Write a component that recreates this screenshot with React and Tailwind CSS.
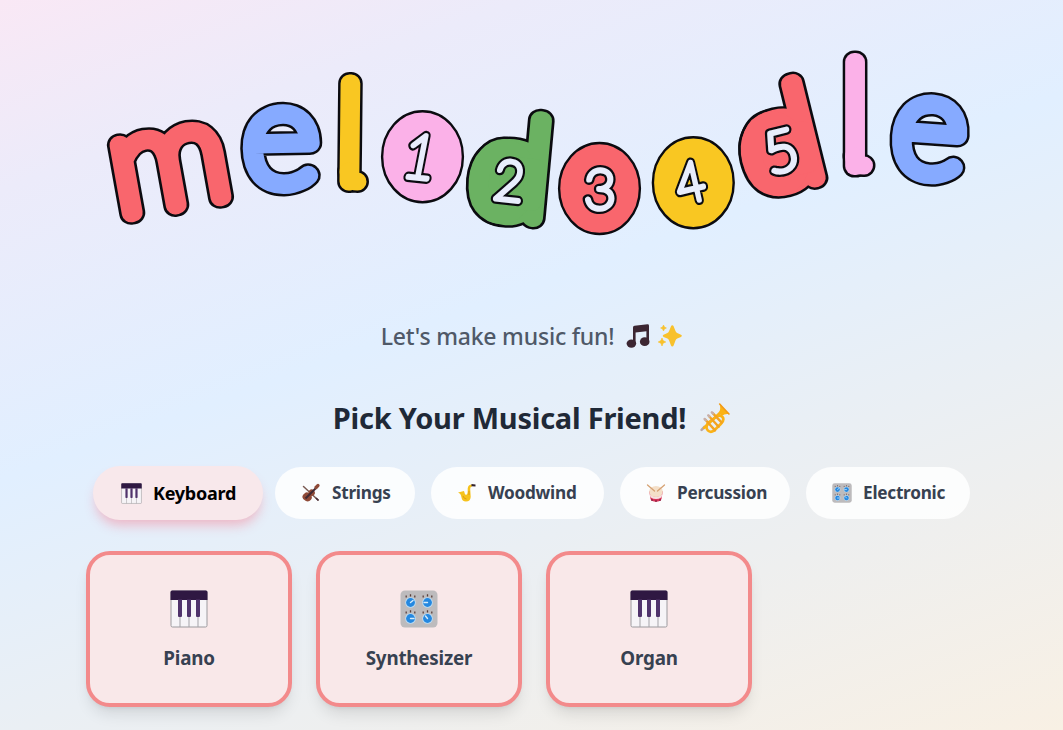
const BLOBS = [
  { id: "m", ch: "m", color: "#f9666d", size: 142, t: "translate(176.3 205.3) rotate(-10.2) scale(1.06 1)" },
  { id: "e1", ch: "e", color: "#86aaff", size: 142, t: "translate(281.500 184) rotate(-1) scale(1.03 1)" },
  { id: "l1", ch: "l", color: "#f9c722", size: 136, t: "translate(349.5 181.5) rotate(0.6)", tail: "M-1 -10 Q0 0 8 0" },
  { id: "d1", ch: "d", color: "#6bb262", size: 136, t: "translate(506.5 215.5) rotate(5.3) scale(1.09 1)", bowl: true },
  { id: "d2", ch: "d", color: "#f9666d", size: 136, t: "translate(790 184.5) rotate(-13.9) scale(1.09 1)", bowl: true },
  { id: "l2", ch: "l", color: "#fbb1e8", size: 145, t: "translate(855 166)", tail: "M-1 -10 Q0 0 9 -0.5" },
  { id: "e2", ch: "e", color: "#86aaff", size: 142, t: "translate(926.500 174) rotate(4)" },
];

const CIRCLES = [
  { cx: 422.5, cy: 156.7, color: "#fbb1e8" },
  { cx: 599.5, cy: 188.5, color: "#f9666d" },
  { cx: 693.3, cy: 182.7, color: "#f9c722" },
];

const DIGITS = [
  { ch: "1", size: 61, t: "translate(416 178) rotate(6) skewX(-5) scale(0.9 1)" },
  { ch: "2", size: 55, t: "translate(507 200) rotate(6) scale(0.95 1)" },
  { ch: "3", size: 55, t: "translate(600 208.500)" },
  { ch: "4", size: 55, t: "translate(694.500 201) rotate(-13) scale(0.88 1)" },
  { ch: "5", size: 57, t: "translate(786 170.500) rotate(-14)" },
];

function Logo() {
  return (
    <svg className="block h-[270px] w-full shrink-0 font-['Lato',sans-serif] font-thin" viewBox="0 0 1063 270" strokeLinejoin="round" strokeLinecap="round" textAnchor="middle">
      <defs>
        {BLOBS.map((b) => (
          <g key={b.id} id={b.id} transform={b.t}>
            <text fontSize={b.size} stroke="inherit">{b.ch}</text>
            {b.tail && <path d={b.tail} fill="none" />}
            {b.bowl && <ellipse cx="-6" cy="-33.500" rx="22" ry="33.500" />}
            {b.bowl && <path d="M0 -50H22V-16H0z" />}
          </g>
        ))}
        {DIGITS.map((d) => (
          <text key={d.ch} id={"n" + d.ch} fontSize={d.size} transform={d.t}>{d.ch}</text>
        ))}
      </defs>
      {BLOBS.map((b) => (
        <g key={b.id}>
          <use href={"#" + b.id} fill="#0b0b10" stroke="#0b0b10" strokeWidth="23" />
          <use href={"#" + b.id} fill={b.color} stroke={b.color} strokeWidth="18" />
        </g>
      ))}
      {CIRCLES.map((c) => (
        <ellipse key={c.cx} cx={c.cx} cy={c.cy} rx="40.4" ry="45.5" fill={c.color} stroke="#0b0b10" strokeWidth="2.4" />
      ))}
      {DIGITS.map((d) => (
        <g key={d.ch}>
          <use href={"#n" + d.ch} fill="#0b0b10" stroke="#0b0b10" strokeWidth="10" />
          <use href={"#n" + d.ch} fill="#e8edfc" stroke="#e8edfc" strokeWidth="5.4" />
        </g>
      ))}
    </svg>
  );
}

function Piano({ className }) {
  return (
    <svg className={className} viewBox="0 0 38 38">
      <rect x="1" y="1" width="36" height="36" rx="1.5" fill="#f6f4f7" stroke="#9c9a9e" strokeWidth="1" />
      <path d="M10 10v27M19 10v27M28 10v27" stroke="#a5a3a8" strokeWidth="1" />
      <path d="M.5 2Q.5.5 2 .5h34Q37.500.5 37.500 2v8H.5z" fill="#2f1842" />
      <path d="M8 9.500h4v16.500q0 1-1 1h-2q-1 0-1-1zM17 9.500h4v16.500q0 1-1 1h-2q-1 0-1-1zM26 9.500h4v16.500q0 1-1 1h-2q-1 0-1-1z" fill="#50336b" />
    </svg>
  );
}

function Knob({ x, y, hand }) {
  return (
    <g transform={`translate(${x} ${y})`}>
      <circle r="5.300" fill="#b9dcf5" />
      <circle r="4.400" fill="#2588e0" />
      <path d={hand} stroke="#d6ecfb" strokeWidth="1.400" strokeLinecap="round" />
      <path d="M-4.300-5v-2M0-6v-2.300M4.300-5v-2" stroke="#5b3f3a" strokeWidth="1.300" />
    </g>
  );
}

function Knobs({ className }) {
  return (
    <svg className={className} viewBox="0 0 38 38">
      <rect x="0.500" y="0.500" width="37" height="37" rx="4.500" fill="#bdbbbd" />
      <Knob x={10.5} y={12.5} hand="M0 0l2.500-2" />
      <Knob x={27.5} y={12.5} hand="M0 0h-3.500" />
      <Knob x={10.5} y={28.5} hand="M0 0h3.500" />
      <Knob x={27.5} y={28.5} hand="M0 0l-2-2.500" />
    </svg>
  );
}

function Violin({ className }) {
  return (
    <svg className={className} viewBox="0 0 20 20">
      <path d="M2.500 3.500L17 17" stroke="#7a5a52" strokeWidth="1.500" strokeLinecap="round" />
      <path d="M3.500 10.500q2-2 4-.7 0-2.300 2-3.300 2-.6 3.500 1t.8 3.500q-1 2-3.200 2 1 2-.6 3.800-2.500 2.600-5.500 1T1.300 14q.2-2.300 2.200-3.500z" fill="#8f4a37" />
      <path d="M4.500 15.500L16 4" stroke="#3f2a33" strokeWidth="1.900" />
      <path d="M15 4.500L17 2.500" stroke="#8f4a37" strokeWidth="3.200" strokeLinecap="round" />
      <path d="M15 15l2.500 2.500" stroke="#4b3038" strokeWidth="1.700" />
    </svg>
  );
}

function Sax({ className }) {
  return (
    <svg className={className} viewBox="0 0 20 20">
      <path d="M1 9.500l6-1.500q.5 3 2 4 1.700-.5 1.700-3V5.500Q11 1.500 15 1.500v2q-2 0-1.800 2.500l.5 8q-.4 4.500-4.700 4.500-4 0-4.500-4T1 9.500z" fill="#f6c21c" />
      <path d="M6 13q1 3 3.500 3M12 8v4" stroke="#dd9a14" strokeWidth="1" fill="none" />
      <path d="M14.500 1l4 .5v2l-4-.3z" fill="#31222e" />
    </svg>
  );
}

function Drum({ className }) {
  return (
    <svg className={className} viewBox="0 0 20 20">
      <path d="M3.200 8h13.600l-1.300 8q-1 2.700-5.500 2.700T4.500 16z" fill="#d93458" />
      <path d="M3.800 11q6.200 6 12.400 0l-.6 3.200q-5.600 3.800-11.200 0z" fill="#f7dfe0" />
      <ellipse cx="10" cy="8.500" rx="6.800" ry="5.600" fill="#f4dfc8" />
      <path d="M1.500 2L8.500 8M18.500 2L11.500 8" stroke="#d6a273" strokeWidth="1.300" strokeLinecap="round" />
      <path d="M6 16v2M10 17v2M14 16v2" stroke="#8e2546" strokeWidth="1.400" />
    </svg>
  );
}

function Notes({ className }) {
  return (
    <svg className={className} viewBox="0 0 24 24" fill="#3c2632">
      <path d="M7 3.500Q7 2 8.500 1.800L21.500.3Q23 .2 23 1.700V18h-2.600V7.200L9.600 8.600V20H7z" />
      <ellipse cx="5.400" cy="19.600" rx="4.800" ry="4.200" />
      <ellipse cx="18.700" cy="17.700" rx="4.800" ry="4.400" />
    </svg>
  );
}

function Sparkles({ className }) {
  return (
    <svg className={className} viewBox="0 0 24 24" fill="#f8c12c">
      <path d="M14.300 1.200q.9 0 1.300 1l2 5.100q.4 1.200 1.600 1.700l3.800 1.700q1.700 1.100 0 2.200l-3.800 1.700q-1.200.5-1.600 1.700l-2 5.100q-.4 1-1.300 1t-1.300-1l-2-5.100q-.4-1.200-1.600-1.700l-3.800-1.700q-1.700-1.100 0-2.200l3.800-1.700q1.200-.5 1.600-1.700l2-5.100q.4-1 1.300-1z" />
      <path d="M5.500 1l.9 2 2 1-2 1-.9 2-.9-2-2-1 2-1zM4 14l1.100 2.600L7.800 18l-2.700 1.200L4 22l-1.100-2.800L.2 18l2.700-1.400z" stroke="#f8c12c" strokeWidth=".6" />
    </svg>
  );
}

function Trumpet({ className }) {
  return (
    <svg className={className} viewBox="0 0 30 30" fill="none" strokeLinecap="round">
      <path d="M2.500 26l3-3" stroke="#b9a6a3" strokeWidth="2.500" />
      <path d="M5 24L22 8" stroke="#fbb316" strokeWidth="2.500" />
      <path d="M20 1q1.500 5-1 8.500l3 3q3-2.500 7-1.800z" fill="#fbb316" />
      <path d="M20 1l9 9.700" stroke="#f39a17" strokeWidth="1.500" />
      <path d="M8.500 19.500q-2.500 4.500 0 7t6 .3l7-7q3.500-4 1-6.500t-6.500.5z" stroke="#fbb316" strokeWidth="2.600" />
      <path d="M6.500 16.500l9 10M10 13l9 10M13.500 10l8.500 9" stroke="#f3a322" strokeWidth="2.300" />
      <path d="M5.500 15.500l1 1M9 12l1 1M12.500 9l1 1" stroke="#c9b0a8" strokeWidth="2.500" />
    </svg>
  );
}

const TABS = [
  { label: "Strings", Icon: Violin, w: "w-[140px]" },
  { label: "Woodwind", Icon: Sax, w: "w-[173px]" },
  { label: "Percussion", Icon: Drum, w: "w-[170px]" },
  { label: "Electronic", Icon: Knobs, w: "w-[164px]" },
];

const CARDS = [
  { label: "Piano", Icon: Piano },
  { label: "Synthesizer", Icon: Knobs },
  { label: "Organ", Icon: Piano },
];

export default function App() {
  return (
    <div className="flex h-[730px] w-full flex-col overflow-hidden bg-[linear-gradient(160deg,#f9e8f5_0%,#ecebfa_17%,#e1efff_43%,#eeefef_76%,#f8f0e4_100%)] font-['Noto_Sans','Open_Sans',sans-serif]">
      <Logo />
      <div className="mt-12 flex h-9 items-center justify-center gap-[12px] text-[23px] font-medium tracking-[-0.2px] text-[#4f5968]">
        <span>Let's make music fun!</span>
        <span className="flex gap-2">
          <Notes className="size-6" />
          <Sparkles className="size-6" />
        </span>
      </div>
      <h1 className="mt-11 flex h-10 items-center justify-center gap-[13px] text-[29px] font-bold tracking-[-0.24px] text-[#1f2937]">
        Pick Your Musical Friend!
        <Trumpet className="size-[31px]" />
      </h1>
      <div className="mt-7 flex h-[54px] items-center gap-4 pl-[93px] text-[17.2px] font-bold tracking-[-0.25px] text-[#374151]">
        <button className="-mr-1 flex h-[54px] w-[170px] items-center rounded-full bg-[#f8e8eb] pl-[28px] text-[18px] text-black shadow-[0_8px_12px_-3px_rgba(248,113,133,0.45)]">
          <Piano className="mr-[11px] size-[21px]" />
          Keyboard
        </button>
        {TABS.map(({ label, Icon, w }) => (
          <button key={label} className={"flex h-[52px] items-center rounded-full bg-white/85 pl-[26px] " + w}>
            <Icon className="mr-[11px] size-[20px]" />
            {label}
          </button>
        ))}
      </div>
      <div className="mt-[31px] flex gap-6 pl-[86px]">
        {CARDS.map(({ label, Icon }) => (
          <div key={label} className="flex h-[156px] w-[206px] flex-col items-center rounded-3xl border-4 border-[#f38a8b] bg-[#f9e8e9] pt-[35px] shadow-[0_10px_15px_-3px_rgba(0,0,0,0.1),0_4px_6px_-4px_rgba(0,0,0,0.1)]">
            <Icon className="size-[38px]" />
            <span className="mt-4 text-[18.8px] leading-7 font-bold tracking-[-0.2px] text-[#374151]">{label}</span>
          </div>
        ))}
      </div>
    </div>
  );
}
